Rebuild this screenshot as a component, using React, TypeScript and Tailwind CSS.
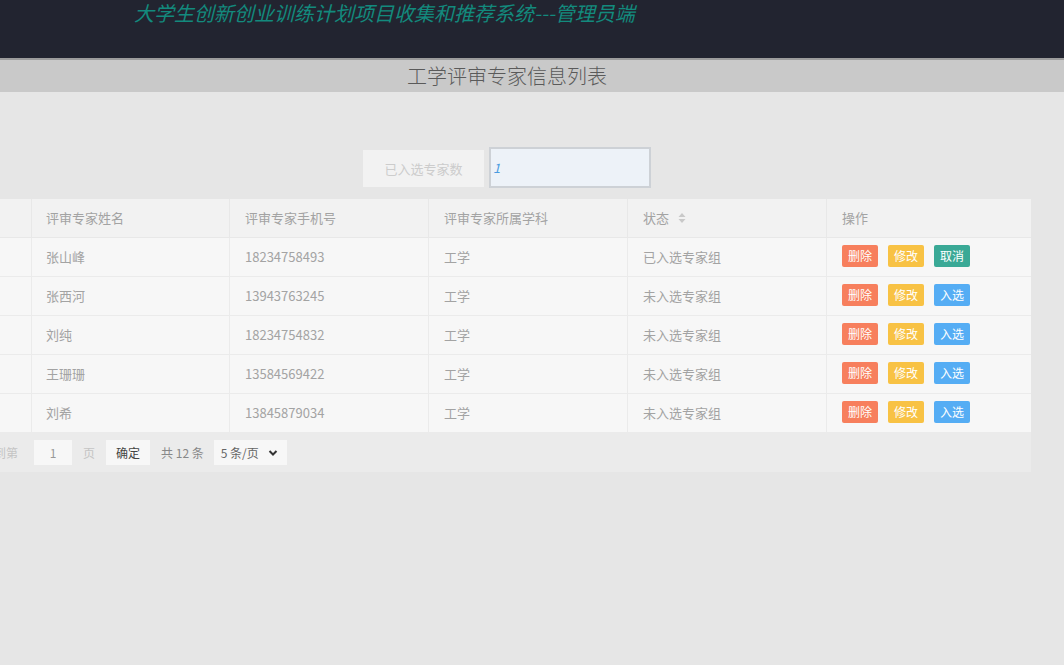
import React from "react";

const rows = [
  { name: "张山峰", phone: "18234758493", sub: "工学", status: "已入选专家组", sel: true },
  { name: "张西河", phone: "13943763245", sub: "工学", status: "未入选专家组", sel: false },
  { name: "刘纯", phone: "18234754832", sub: "工学", status: "未入选专家组", sel: false },
  { name: "王珊珊", phone: "13584569422", sub: "工学", status: "未入选专家组", sel: false },
  { name: "刘希", phone: "13845879034", sub: "工学", status: "未入选专家组", sel: false },
];

const font = { fontFamily: '"Noto Sans CJK SC", "Noto Sans", sans-serif' };

export default function App() {
  return (
    <div className="w-[1064px] h-[665px] bg-[#e6e6e6] overflow-hidden" style={font}>
      <div className="h-[58px] bg-[#222430] pl-[134px] pt-[1px]">
        <span className="text-[20px] leading-[24px] italic text-[#138a7d]">
          大学生创新创业训练计划项目收集和推荐系统---管理员端
        </span>
      </div>
      <div className="h-[2px] bg-[#9c9c9c]" />
      <div className="h-[32px] bg-[#c9c9c9] flex items-center justify-center pr-[50px]">
        <span className="text-[20px] leading-[24px] text-[#5a5a5a] font-light">工学评审专家信息列表</span>
      </div>
      <div className="flex items-start pl-[363px] mt-[55px]">
        <div className="w-[121px] h-[37px] mt-[3px] bg-[#f2f2f2] flex items-center justify-center text-[13px] text-[#cccccc]">
          已入选专家数
        </div>
        <div className="w-[162px] h-[41px] ml-[5px] bg-[#edf2f8] border-2 border-[#cdd1d6] flex items-center pl-[2px] text-[13px] italic text-[#4a9be0]">
          1
        </div>
      </div>
      <div className="w-[1031px] mt-[11px]">
        <div className="flex h-[39px] bg-[#f2f2f2] border-b border-[#e8e8e8] text-[13px] text-[#a3a3a3]">
          <div className="w-[32px] border-r border-[#e8e8e8]" />
          <div className="w-[198px] border-r border-[#e8e8e8] flex items-center pl-[14px]">评审专家姓名</div>
          <div className="w-[199px] border-r border-[#e8e8e8] flex items-center pl-[15px]">评审专家手机号</div>
          <div className="w-[199px] border-r border-[#e8e8e8] flex items-center pl-[15px]">评审专家所属学科</div>
          <div className="w-[199px] border-r border-[#e8e8e8] flex items-center pl-[15px]">
            状态
            <svg width="8" height="12" viewBox="0 0 8 12" className="ml-[9px]">
              <path d="M4 1 L7.5 5 L0.5 5 Z" fill="#c9c9c9" />
              <path d="M4 11 L7.5 7 L0.5 7 Z" fill="#c9c9c9" />
            </svg>
          </div>
          <div className="flex-1 flex items-center pl-[15px]">操作</div>
        </div>
        {rows.map((r) => (
          <div key={r.phone} className="flex h-[39px] bg-[#f7f7f7] border-b border-[#ebebeb] text-[13px] text-[#a3a3a3]">
            <div className="w-[32px] border-r border-[#ebebeb]" />
            <div className="w-[198px] border-r border-[#ebebeb] flex items-center pl-[14px]">{r.name}</div>
            <div className="w-[199px] border-r border-[#ebebeb] flex items-center pl-[15px]">{r.phone}</div>
            <div className="w-[199px] border-r border-[#ebebeb] flex items-center pl-[15px]">{r.sub}</div>
            <div className="w-[199px] border-r border-[#ebebeb] flex items-center pl-[15px]">{r.status}</div>
            <div className="flex-1 flex items-center pl-[15px] gap-[10px] pb-[3px]">
              <span className="w-[36px] h-[22px] rounded-[2px] bg-[#f77f5d] text-white text-[12px] flex items-center justify-center">删除</span>
              <span className="w-[36px] h-[22px] rounded-[2px] bg-[#f8c244] text-white text-[12px] flex items-center justify-center">修改</span>
              {r.sel ? (
                <span className="w-[36px] h-[22px] rounded-[2px] bg-[#3aa996] text-white text-[12px] flex items-center justify-center">取消</span>
              ) : (
                <span className="w-[36px] h-[22px] rounded-[2px] bg-[#55adf4] text-white text-[12px] flex items-center justify-center">入选</span>
              )}
            </div>
          </div>
        ))}
        <div className="h-[39px] bg-[#ebebeb] flex items-center text-[12px] overflow-hidden">
          <span className="ml-[-6px] text-[#c4c4c4]">到第</span>
          <div className="ml-[16px] w-[38px] h-[25px] bg-[#f7f7f7] flex items-center justify-center text-[#999]">1</div>
          <span className="ml-[11px] text-[#c4c4c4]">页</span>
          <div className="ml-[11px] w-[44px] h-[25px] bg-[#f7f7f7] flex items-center justify-center text-[#444]">确定</div>
          <span className="ml-[11px] text-[#888]">共 12 条</span>
          <div className="ml-[10px] w-[73px] h-[25px] bg-[#f7f7f7] flex items-center pl-[7px] text-[#666]">
            <span>5 条/页</span>
            <svg width="10" height="8" viewBox="0 0 10 8" className="ml-[9px]">
              <path d="M1.5 2 L5 5.5 L8.5 2" stroke="#333" strokeWidth="2" fill="none" />
            </svg>
          </div>
        </div>
      </div>
    </div>
  );
}
